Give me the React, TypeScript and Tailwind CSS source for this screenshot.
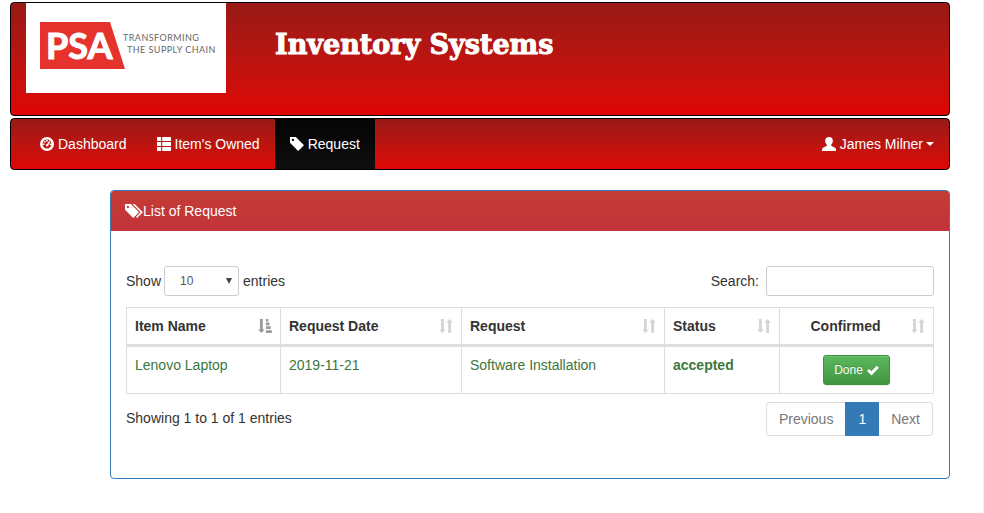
import React from "react";

type GlyphProps = { d: string; className?: string; box?: string };

// Icon outlines use a 1200-unit em square with the y axis pointing up.
function Glyph({ d, box = "0 0 1200 1200", className = "size-3.5" }: GlyphProps) {
  return (
    <svg viewBox={box} className={`inline-block shrink-0 fill-current ${className}`} aria-hidden="true">
      <path d={d} transform="matrix(1 0 0 -1 0 1200)" fillRule="evenodd" />
    </svg>
  );
}

const TAG =
  "M1 700v475q0 10 7.500 17.500t17.500 7.500h474l700 -700l-500 -500zM148 953q0 -42 29 -71q30 -30 71.500 -30t71.500 30q29 29 29 71t-29 71q-30 30 -71.500 30t-71.500 -30q-29 -29 -29 -71z";
const TAGS = TAG + "M640 1200h190l700 -700l-500 -500l-95 95l405 405z";
const LIST =
  "M50 1200h310v-340h-360v290q0 50 50 50zM450 1200h700q50 0 50 -50v-290h-750zM0 770h360v-340h-360zM450 770h750v-340h-750zM0 340h360v-340h-310q-50 0 -50 50zM450 340h750v-290q0 -50 -50 -50h-700z";
const DASHBOARD =
  "M600 1200a600 600 0 1 0 0 -1200a600 600 0 1 0 0 1200zM600 980a380 380 0 1 1 0 -760a380 380 0 1 1 0 760zM530 950h140v-130h-140zM350 850h130v-130h-130zM240 640h140v-130h-140zM820 640h140v-130h-140zM780 880l100 -80l-150 -240q20 -100 -60 -150q-90 -40 -160 30q-40 100 50 170l70 20z";
const USER =
  "M600 1200q-160 0 -245 -85t-85 -235q0 -120 50 -210q40 -70 90 -110v-110q-40 -50 -160 -90q-170 -60 -215 -130q-35 -60 -35 -230h1200q0 170 -35 230q-45 70 -215 130q-120 40 -160 90v110q50 40 90 110q50 90 50 210q0 150 -85 235t-245 85z";
const CHECK = "M10 510l190 190l250 -230l520 550l220 -200l-740 -760z";
const SORT =
  "M170 1200h240v-900h160l-280 -300l-280 300h160zM790 0h240v900h160l-280 300l-280 -300h160z";
const SORT_ASC =
  "M170 1200h240v-900h160l-280 -300l-280 300h160zM680 1200h200v-210h-200zM680 900h300v-230h-300zM680 570h410v-230h-410zM680 230h510v-230h-510z";

function Logo() {
  return (
    <a href="#" aria-label="PSA" className="block h-[90px] w-[200px] shrink-0 bg-white">
      <svg viewBox="0 0 200 90" className="block size-full">
        <path d="M14 19h70l15 47H14z" fill="#e5322d" />
        <text x="20" y="56" fill="#fff" stroke="#fff" strokeWidth="1" className="font-[Lato,sans-serif] text-[36px] font-bold">
          PSA
        </text>
        <g fill="#666" className="font-[Lato,sans-serif] text-[9px] tracking-wider">
          <text x="97" y="38">TRANSFORMING</text>
          <text x="101" y="50">THE SUPPLY CHAIN</text>
        </g>
      </svg>
    </a>
  );
}

const navItems = [
  { label: "Dashboard", icon: DASHBOARD, active: false },
  { label: "Item's Owned", icon: LIST, active: false },
  { label: "Request", icon: TAG, active: true },
];

const columns = [
  { label: "Item Name", col: "w-[154px]", sorted: true, center: false },
  { label: "Request Date", col: "w-[181px]", sorted: false, center: false },
  { label: "Request", col: "w-[203px]", sorted: false, center: false },
  { label: "Status", col: "w-[115px]", sorted: false, center: false },
  { label: "Confirmed", col: "w-[154px]", sorted: false, center: true },
];

const cell = "border-r border-b border-[#ddd] p-2 align-top";

export default function App() {
  return (
    <div className="min-h-screen border-r border-[#eee] bg-white pt-0.5 pr-[33px] pl-2.5 font-['Liberation_Sans',Arial,sans-serif] text-sm leading-5 text-[#333]">
      <header className="mb-0.5 flex rounded border border-black bg-linear-to-b from-[#981915] to-[#df0505] pb-[22px] pl-[15px]">
        <Logo />
        <h1 className="ml-[49px] pt-6 font-['DejaVu_Serif',serif] text-[27px] leading-9 font-bold text-white [-webkit-text-stroke:1px_white]">
          Inventory Systems
        </h1>
      </header>

      <nav className="mb-5 flex justify-between rounded border border-black bg-linear-to-b from-[#981915] to-[#df0505] pl-3.5 text-white">
        <ul className="flex">
          {navItems.map((item) => (
            <li key={item.label}>
              <a
                href="#"
                className={`flex items-center gap-1 p-[15px] ${item.active ? "bg-linear-to-b from-[#050505] to-[#0f0f0f]" : ""}`}
              >
                <Glyph d={item.icon} />
                {item.label}
              </a>
            </li>
          ))}
        </ul>
        <button type="button" className="flex items-center p-[15px]">
          <Glyph d={USER} className="mr-1 size-3.5" />
          James Milner
          <span className="ml-[3px] border-x-4 border-t-4 border-x-transparent border-t-white" />
        </button>
      </nav>

      <main className="ml-[100px] rounded border border-[#337ab7]">
        <h2 className="flex items-center rounded-t-[3px] bg-linear-to-b from-[#c43c35] to-[#c3333b] px-3.5 py-2.5 text-white">
          <Glyph d={TAGS} box="0 0 1540 1200" className="h-3.5 w-[18px]" />
          List of Request
        </h2>

        <div className="px-[15px] pt-[35px] pb-[42px]">
          <div className="mb-[11px] flex items-center justify-between">
            <label className="flex items-center gap-[3px]">
              Show
              <span className="relative mr-px">
                <select
                  defaultValue="10"
                  className="block h-[30px] w-[75px] appearance-none rounded-[3px] border border-[#ccc] bg-white px-[15px] text-xs text-[#555]"
                >
                  <option>10</option>
                  <option>25</option>
                  <option>50</option>
                  <option>100</option>
                </select>
                <svg viewBox="0 0 6 6" className="pointer-events-none absolute top-3 right-[7px] size-1.5 fill-[#444]">
                  <path d="M0 0h6L3 6z" />
                </svg>
              </span>
              entries
            </label>
            <label className="flex items-center gap-[7px]">
              Search:
              <input type="search" className="h-[30px] w-[168px] rounded-[3px] border border-[#ccc] bg-white px-2.5 text-xs" />
            </label>
          </div>

          <table className="w-full table-fixed border-separate border-spacing-0 border-t border-l border-[#ddd]">
            <colgroup>
              {columns.map((c) => (
                <col key={c.label} className={c.col} />
              ))}
            </colgroup>
            <thead>
              <tr>
                {columns.map((c) => (
                  <th
                    key={c.label}
                    scope="col"
                    className="border-r border-b-3 border-[#ddd] p-2 font-bold"
                  >
                    <div className="flex items-center justify-between">
                      <span className={c.center ? "flex-1 pr-2 text-center" : ""}>{c.label}</span>
                      <Glyph
                        d={c.sorted ? SORT_ASC : SORT}
                        className={c.sorted ? "size-3.5 text-[#999]" : "size-3.5 text-[#d4d4d4]"}
                      />
                    </div>
                  </th>
                ))}
              </tr>
            </thead>
            <tbody>
              <tr className="text-[#3c763d]">
                <td className={cell}>Lenovo Laptop</td>
                <td className={cell}>2019-11-21</td>
                <td className={cell}>Software Installation</td>
                <td className={`${cell} font-bold`}>accepted</td>
                <td className={cell}>
                  <button
                    type="button"
                    className="mx-auto flex h-[30px] items-center gap-1 rounded-[3px] border border-[#3e8f3e] bg-linear-to-b from-[#5cb85c] to-[#419641] px-2.5 text-xs text-white shadow-[inset_0_1px_0_rgba(255,255,255,0.15),0_1px_1px_rgba(0,0,0,0.075)] [text-shadow:0_-1px_0_rgba(0,0,0,0.2)]"
                  >
                    Done
                    <Glyph d={CHECK} className="size-3" />
                  </button>
                </td>
              </tr>
            </tbody>
          </table>

          <div className="mt-2 flex items-start justify-between">
            <p className="pt-1.5">Showing 1 to 1 of 1 entries</p>
            <div className="mr-px flex h-[34px] text-[#777]">
              <button type="button" className="rounded-l border border-r-0 border-[#ddd] px-3">
                Previous
              </button>
              <button type="button" className="border border-[#337ab7] bg-[#337ab7] px-3 text-white">
                1
              </button>
              <button type="button" className="rounded-r border border-l-0 border-[#ddd] px-3">
                Next
              </button>
            </div>
          </div>
        </div>
      </main>
    </div>
  );
}
